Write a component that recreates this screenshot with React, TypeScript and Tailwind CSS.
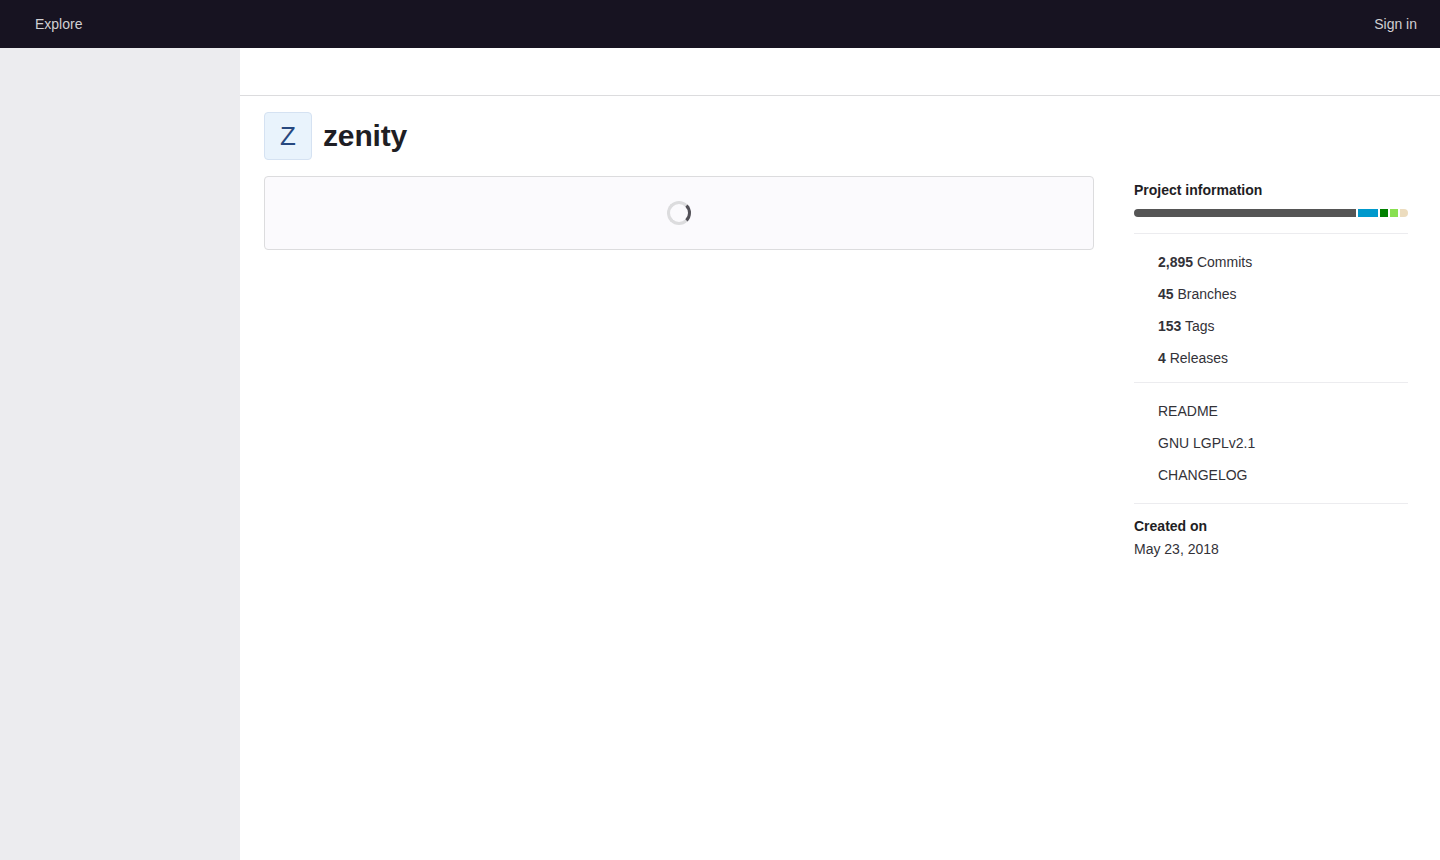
import React from 'react';

const counts = [
  { value: '2,895', label: 'Commits' },
  { value: '45', label: 'Branches' },
  { value: '153', label: 'Tags' },
  { value: '4', label: 'Releases' },
];

const links = ['README', 'GNU LGPLv2.1', 'CHANGELOG'];

const Spinner = () => (
  <div className="h-6 w-6 rounded-full border-[3px] border-[#dcdcde] border-r-[#535158]" />
);

const LanguageBar = () => (
  <div className="mt-[10px] flex h-2 gap-0.5 overflow-hidden rounded-full">
    <div className="w-[222px] bg-[#555555]" />
    <div className="w-5 bg-[#0099cc]" />
    <div className="w-2 bg-[#008000]" />
    <div className="w-2 bg-[#89e051]" />
    <div className="w-2 bg-[#ecdcbe]" />
  </div>
);

export default function App() {
  return (
    <div className="flex min-h-[860px] flex-col bg-white font-['Liberation_Sans',sans-serif] text-sm text-[#333238]">
      <header className="flex h-12 items-center justify-between bg-[#171321] pl-[35px] pr-[23px] text-[#d1d0d3]">
        <a>Explore</a>
        <a>Sign in</a>
      </header>
      <div className="flex flex-1">
        <aside className="w-60 bg-[#ececef]" />
        <main className="flex-1">
          <div className="h-12 border-b border-[#dcdcde]" />
          <div className="pl-6 pr-8">
            <div className="flex items-center gap-[11px] py-4">
              <div className="flex h-12 w-12 items-center justify-center rounded border border-[#d5e2f2] bg-[#e9f3fc] pt-0.5 text-[26px] text-[#27487f]">
                Z
              </div>
              <h1 className="text-[30px] font-bold leading-10 tracking-[-0.005em] text-[#1f1e24]">zenity</h1>
            </div>
            <div className="flex items-start gap-10">
              <div className="flex h-[74px] w-[830px] items-center justify-center rounded border border-[#dcdcde] bg-[#fbfafd]">
                <Spinner />
              </div>
              <aside className="flex-1">
                <h2 className="mt-[5px] text-sm font-bold leading-[18px] text-[#1f1e24]">Project information</h2>
                <LanguageBar />
                <div className="mt-4 border-t border-[#ececef] pb-2 pl-6 pt-3">
                  {counts.map((c) => (
                    <div key={c.label} className="flex h-8 items-center">
                      <span>
                        <strong>{c.value}</strong> {c.label}
                      </span>
                    </div>
                  ))}
                </div>
                <div className="border-t border-[#ececef] pb-3 pl-6 pt-3">
                  {links.map((l) => (
                    <div key={l} className="flex h-8 items-center">
                      {l}
                    </div>
                  ))}
                </div>
                <div className="border-t border-[#ececef] pt-3">
                  <p className="font-bold leading-5 text-[#1f1e24]">Created on</p>
                  <p className="mt-[3px] leading-5">May 23, 2018</p>
                </div>
              </aside>
            </div>
          </div>
        </main>
      </div>
    </div>
  );
}
